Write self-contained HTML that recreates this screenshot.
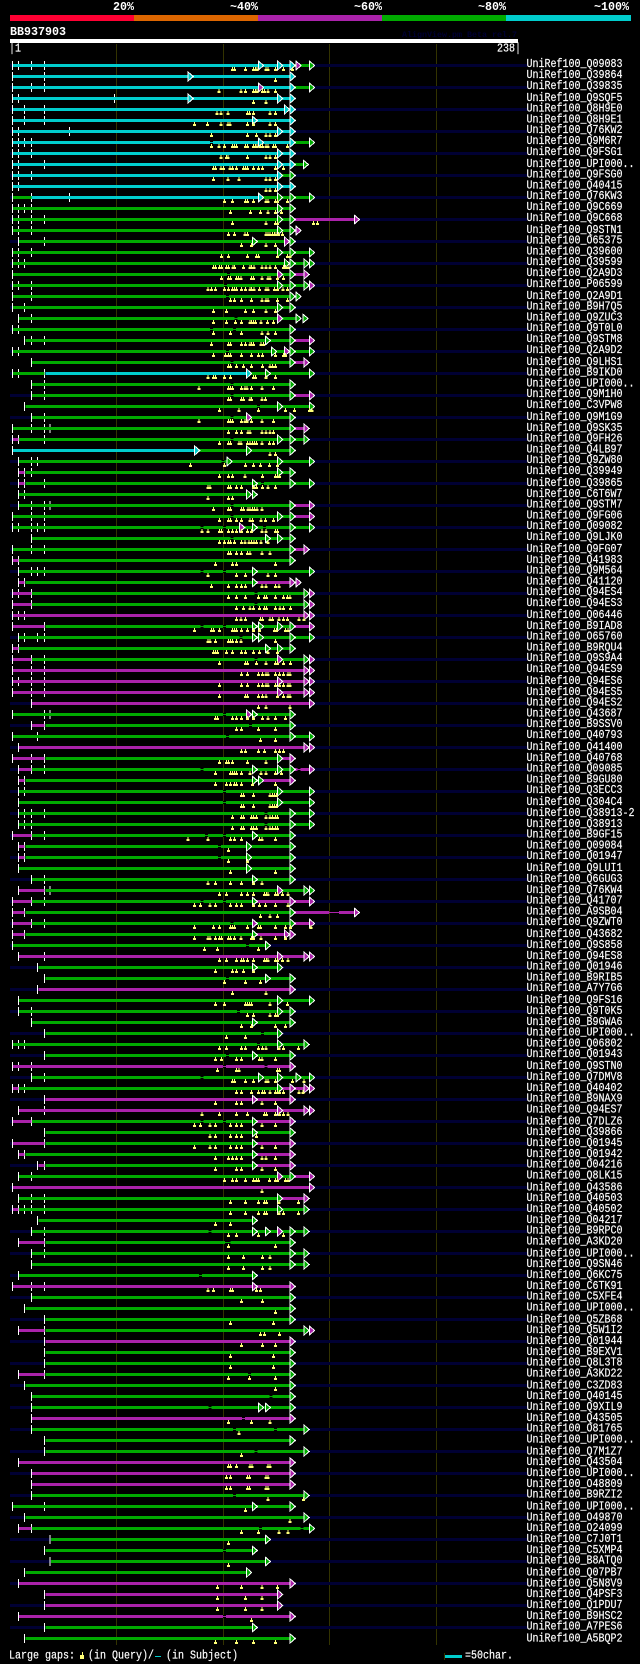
<!DOCTYPE html>
<html><head><meta charset="utf-8"><style>
html,body{margin:0;padding:0;background:#000}
body{width:640px;height:1664px;position:relative;overflow:hidden;font-family:"Liberation Mono",monospace;font-size:10px;color:#fff}
.a{position:absolute}
.h{position:absolute;font-weight:bold;font-size:11.67px;line-height:12px;white-space:pre}
.n{position:absolute;line-height:11px;white-space:pre;transform:scaleY(1.2);transform-origin:0 0;-webkit-text-stroke:.15px #fff}
#l{position:absolute;left:526.5px;top:60px;margin:0;font:10px/9.1667px "Liberation Mono",monospace;white-space:pre;transform:scaleY(1.2);transform-origin:0 0;-webkit-text-stroke:.15px #fff}
svg{position:absolute;left:0;top:0}
svg path{fill:none}
.c{fill:#0cc}.g{fill:#0a0}.m{fill:#a2a}
.t{marker:url(#T)}.k{marker:url(#K)}.y{marker:url(#Y)}
.e{marker:url(#A)}.b{marker:url(#B)}.d{marker:url(#D)}
</style></head><body>
<div class="a" style="left:116px;top:44px;width:1px;height:1601px;background:#330"></div>
<div class="a" style="left:223px;top:44px;width:1px;height:1601px;background:#330"></div>
<div class="a" style="left:329px;top:44px;width:1px;height:1601px;background:#330"></div>
<div class="a" style="left:436px;top:44px;width:1px;height:1601px;background:#330"></div>
<div class="a" style="left:10px;top:64px;width:517px;height:1565px;background:repeating-linear-gradient(#003 0 3px,transparent 3px 22px)"></div>
<div class="h" style="left:113px;top:1px">20%</div>
<div class="h" style="left:230px;top:1px">~40%</div>
<div class="h" style="left:354px;top:1px">~60%</div>
<div class="h" style="left:478px;top:1px">~80%</div>
<div class="h" style="left:594px;top:1px">~100%</div>
<div class="a" style="left:10px;top:15px;width:124px;height:6px;background:#f03"></div>
<div class="a" style="left:134px;top:15px;width:124px;height:6px;background:#d60"></div>
<div class="a" style="left:258px;top:15px;width:124px;height:6px;background:#a2a"></div>
<div class="a" style="left:382px;top:15px;width:124px;height:6px;background:#0a0"></div>
<div class="a" style="left:506px;top:15px;width:125px;height:6px;background:#0cc"></div>
<div class="h" style="left:10px;top:26px">BB937903</div>
<div class="a" style="left:402px;top:30px;font-size:8.33px;font-weight:bold;color:#003;line-height:10px;white-space:pre">AlignView.pm Beta rel.7</div>
<div class="a" style="left:10px;top:39px;width:508px;height:4px;background:#fff"></div>
<div class="n" style="left:9px;top:43px">|1</div>
<div class="n" style="left:497px;top:43px">238|</div>
<svg width="640" height="1664" shape-rendering="crispEdges">
<defs>
<marker id="T" markerUnits="userSpaceOnUse" markerWidth="1" markerHeight="1" overflow="visible"><rect x="-1.2" y="-4.5" width="2.45" height="9" fill="#fff"/></marker>
<marker id="K" markerUnits="userSpaceOnUse" markerWidth="1" markerHeight="1" overflow="visible"><rect x="-3.7" y="-1.5" width="7.35" height="1" fill="#000"/><rect x="-3.7" y=".5" width="7.35" height="1" fill="#000"/></marker>
<marker id="Y" markerUnits="userSpaceOnUse" markerWidth="1" markerHeight="1" overflow="visible"><path d="M-1.2 1.5h2.45v2h2.45v2h-7.35v-2h2.45z" style="fill:#ff7"/></marker>
<marker id="A" markerUnits="userSpaceOnUse" markerWidth="1" markerHeight="1" overflow="visible"><path d="M-1.2-5.5 14.7 0-1.2 5.5z" style="fill:#fff"/><path d="M1.25-3.5 10.5 0 1.25 3.5z" style="fill:#0cc"/></marker>
<marker id="B" markerUnits="userSpaceOnUse" markerWidth="1" markerHeight="1" overflow="visible"><path d="M-1.2-5.5 14.7 0-1.2 5.5z" style="fill:#fff"/><path d="M1.25-3.5 10.5 0 1.25 3.5z" style="fill:#0a0"/></marker>
<marker id="D" markerUnits="userSpaceOnUse" markerWidth="1" markerHeight="1" overflow="visible"><path d="M-1.2-5.5 14.7 0-1.2 5.5z" style="fill:#fff"/><path d="M1.25-3.5 10.5 0 1.25 3.5z" style="fill:#a2a"/></marker>
</defs>
<g transform="translate(0,.5) scale(.40816,1)">
<g transform=translate(0,65)><path class=t d="M30 0H45H77H109"/><path class=c d="M32-1.5H711v3H32z"/><path class=g d="M711-1.5H758v3H711z"/><path class=e d="M633 0H680H711"/><path class=d d="M725 0h0"/><path class=b d="M758 0h0"/><path class=y d="M569 0H574H601H621H626H630H652H657H675H694H716"/></g>
<g transform=translate(0,76)><path class=t d="M30 0H109"/><path class=c d="M32-1.5H711v3H32z"/><path class=e d="M461 0H711"/><path class=y d="M675 0h0"/></g>
<g transform=translate(0,87)><path class=t d="M30 0H77H109"/><path class=c d="M32-1.5H711v3H32z"/><path class=g d="M711-1.5H758v3H711z"/><path class=d d="M633 0h0"/><path class=e d="M711 0h0"/><path class=b d="M758 0h0"/><path class=y d="M537 0H591H601H621H626H630H643H648H657H675"/></g>
<g transform=translate(0,98)><path class=t d="M30 0H45H280"/><path class=c d="M32-1.5H711v3H32z"/><path class=e d="M461 0H680H711"/><path class=y d="M621 0H652"/></g>
<g transform=translate(0,109)><path class=t d="M30 0H60H109"/><path class=c d="M32-1.5H711v3H32z"/><path class=e d="M697 0H711"/><path class=y d="M532 0H542H559H606H611H621H662H675"/></g>
<g transform=translate(0,120)><path class=t d="M30 0H60H109"/><path class=c d="M32-1.5H711v3H32z"/><path class=e d="M618 0H711"/><path class=y d="M476 0H508H542H559H564H606H621H662H675"/></g>
<g transform=translate(0,131)><path class=t d="M30 0H45H170"/><path class=c d="M32-1.5H711v3H32z"/><path class=e d="M680 0H711"/><path class=y d="M518 0H606H628H652H662H675"/></g>
<g transform=translate(0,142)><path class=t d="M30 0H45H60H77"/><path class=c d="M32-1.5H711v3H32z"/><path class=g d="M711-1.5H758v3H711z"/><path class=k d="M518 0h0"/><path class=e d="M633 0H711"/><path class=b d="M758 0h0"/><path class=y d="M518 0H537H550H569H574H579H601H606H621H626H630H638H643H652H657H670H675H704"/></g>
<g transform=translate(0,153)><path class=t d="M30 0H45H77"/><path class=c d="M32-1.5H711v3H32z"/><path class=e d="M680 0H711"/><path class=y d="M542 0H555H559H606H652H662H675"/></g>
<g transform=translate(0,164)><path class=t d="M30 0H45H109"/><path class=c d="M32-1.5H711v3H32z"/><path class=g d="M711-1.5H743v3H711z"/><path class=e d="M680 0H711"/><path class=b d="M743 0h0"/><path class=y d="M523 0H528H542H547H564H569H579H596H601H606H621H633H643H675H694"/></g>
<g transform=translate(0,175)><path class=t d="M30 0H45H77"/><path class=c d="M32-1.5H680v3H32z"/><path class=g d="M680-1.5H711v3H680z"/><path class=e d="M680 0h0"/><path class=b d="M711 0h0"/><path class=y d="M523 0H559H586H652H662H675"/></g>
<g transform=translate(0,186)><path class=t d="M30 0H45"/><path class=c d="M32-1.5H711v3H32z"/><path class=e d="M680 0H711"/><path class=y d="M652 0H662H675"/></g>
<g transform=translate(0,197)><path class=t d="M30 0H77H170"/><path class=g d="M32-1.5H77v3H32zM633-1.5H758v3H633z"/><path class=c d="M77-1.5H633v3H77z"/><path class=e d="M633 0h0"/><path class=b d="M680 0H711H758"/><path class=y d="M550 0H569H601H606H621H652H657H675H680H704"/></g>
<g transform=translate(0,208)><path class=t d="M30 0H45H60H77"/><path class=g d="M32-1.5H711v3H32z"/><path class=b d="M680 0H711"/><path class=y d="M565 0H614H638H657H675H690"/></g>
<g transform=translate(0,219)><path class=t d="M30 0H45H77H109"/><path class=g d="M32-1.5H711v3H32z"/><path class=m d="M711-1.5H868v3H711z"/><path class=b d="M680 0H711"/><path class=d d="M868 0h0"/><path class=y d="M569 0H652H675H680H768H778"/></g>
<g transform=translate(0,230)><path class=t d="M30 0H45H77"/><path class=g d="M32-1.5H711v3H32z"/><path class=m d="M711-1.5H725v3H711z"/><path class=b d="M680 0H711"/><path class=d d="M725 0h0"/><path class=y d="M560 0H574H600H606H652H657H662H667H672H676H682H692"/></g>
<g transform=translate(0,241)><path class=t d="M45 0H109"/><path class=g d="M47-1.5H711v3H47z"/><path class=b d="M618 0H711"/><path class=d d="M697 0h0"/><path class=y d="M592 0H616H652H675"/></g>
<g transform=translate(0,252)><path class=t d="M30 0H45H77"/><path class=g d="M32-1.5H758v3H32z"/><path class=b d="M680 0H711H758"/><path class=y d="M543 0H560H606H628H633H680H704H710"/></g>
<g transform=translate(0,263)><path class=t d="M30 0H45H60"/><path class=g d="M32-1.5H758v3H32z"/><path class=b d="M697 0H711H745H758"/><path class=y d="M523 0H528H538H543H555H560H571H575H597H612H616H622H642H652H662H675H694H700H705"/></g>
<g transform=translate(0,274)><path class=t d="M30 0h0"/><path class=g d="M32-1.5H711v3H32z"/><path class=m d="M711-1.5H745v3H711z"/><path class=k d="M560 0h0"/><path class=d d="M680 0H745"/><path class=b d="M711 0h0"/><path class=y d="M543 0H560H565H579H584H590H616H621H642H657H662H680H694"/></g>
<g transform=translate(0,285)><path class=t d="M30 0H45H77"/><path class=g d="M32-1.5H745v3H32z"/><path class=m d="M745-1.5H758v3H745z"/><path class=k d="M553 0h0"/><path class=b d="M680 0H711H745"/><path class=d d="M758 0h0"/><path class=y d="M509 0H518H528H550H560H569H574H579H592H602H612H616H622H636H652H657H672H680H693H704"/></g>
<g transform=translate(0,296)><path class=t d="M30 0H77"/><path class=g d="M32-1.5H711v3H32z"/><path class=k d="M558 0h0"/><path class=b d="M711 0H725"/><path class=y d="M565 0H574H592H616H642H652H657H680H704"/></g>
<g transform=translate(0,307)><path class=t d="M30 0H60"/><path class=g d="M32-1.5H711v3H32z"/><path class=b d="M680 0H711"/><path class=y d="M523 0H555H602H621H652H675"/></g>
<g transform=translate(0,318)><path class=t d="M45 0H77"/><path class=g d="M47-1.5H725v3H47z"/><path class=k d="M578 0h0"/><path class=d d="M680 0h0"/><path class=b d="M725 0H742"/><path class=y d="M523 0H555H577H592H612H616H621H626H640H655H670"/></g>
<g transform=translate(0,329)><path class=t d="M30 0H45"/><path class=g d="M32-1.5H711v3H32z"/><path class=k d="M518 0H574"/><path class=b d="M711 0h0"/><path class=y d="M523 0H565H592H642H657H675"/></g>
<g transform=translate(0,340)><path class=t d="M60 0H77H109"/><path class=g d="M62-1.5H711v3H62z"/><path class=m d="M711-1.5H758v3H711z"/><path class=b d="M650 0H711"/><path class=d d="M758 0h0"/><path class=y d="M518 0H560H565H592H602H612H616H621H640H645"/></g>
<g transform=translate(0,351)><path class=t d="M30 0H45"/><path class=g d="M32-1.5H758v3H32z"/><path class=k d="M558 0h0"/><path class=b d="M665 0H711H758"/><path class=d d="M697 0h0"/><path class=y d="M523 0H553H560H565H592H616H633H643H675H695H700"/></g>
<g transform=translate(0,362)><path class=t d="M77 0h0"/><path class=g d="M79-1.5H711v3H79z"/><path class=m d="M711-1.5H745v3H711z"/><path class=k d="M569 0h0"/><path class=b d="M711 0h0"/><path class=d d="M745 0h0"/><path class=y d="M560 0H565H579H597H616H643H662H667H675"/></g>
<g transform=translate(0,373)><path class=t d="M30 0H45H109"/><path class=g d="M32-1.5H109v3H32zM604-1.5H758v3H604z"/><path class=c d="M111-1.5H604v3H111z"/><path class=e d="M604 0h0"/><path class=b d="M650 0H758"/><path class=y d="M509 0H523H528H550H565H621H626H652H675"/></g>
<g transform=translate(0,384)><path class=t d="M77 0H109"/><path class=g d="M79-1.5H711v3H79z"/><path class=k d="M569 0h0"/><path class=b d="M711 0h0"/><path class=y d="M487 0H560H565H570H592H600H605H616H642H670"/></g>
<g transform=translate(0,395)><path class=t d="M77 0H109"/><path class=g d="M79-1.5H711v3H79z"/><path class=m d="M711-1.5H758v3H711z"/><path class=k d="M569 0h0"/><path class=b d="M711 0h0"/><path class=d d="M758 0h0"/><path class=y d="M560 0H565H592H597H612H616H642H650"/></g>
<g transform=translate(0,406)><path class=t d="M60 0h0"/><path class=g d="M62-1.5H758v3H62z"/><path class=k d="M633 0h0"/><path class=b d="M680 0H758"/><path class=y d="M538 0H586H633H700H721H758H764"/></g>
<g transform=translate(0,417)><path class=t d="M77 0H109"/><path class=g d="M79-1.5H711v3H79z"/><path class=k d="M569 0h0"/><path class=d d="M604 0h0"/><path class=b d="M711 0h0"/><path class=y d="M487 0H560H565H570H592H600H605H616H642H670"/></g>
<g transform=translate(0,428)><path class=t d="M30 0H77H109H123"/><path class=g d="M32-1.5H711v3H32z"/><path class=m d="M711-1.5H745v3H711z"/><path class=b d="M711 0h0"/><path class=d d="M745 0h0"/><path class=y d="M560 0H579H592H607H612H642H652H662H670"/></g>
<g transform=translate(0,439)><path class=t d="M30 0H45H109"/><path class=m d="M32-1.5H45v3H32z"/><path class=g d="M47-1.5H745v3H47z"/><path class=k d="M569 0h0"/><path class=b d="M680 0H711H745"/><path class=y d="M538 0H560H565H585H590H606H612H618H624H628H642H660H670"/></g>
<g transform=translate(0,450)><path class=t d="M30 0h0"/><path class=c d="M32-1.5H477v3H32z"/><path class=g d="M477-1.5H711v3H477z"/><path class=e d="M477 0h0"/><path class=b d="M604 0H711"/><path class=y d="M662 0H675"/></g>
<g transform=translate(0,461)><path class=t d="M45 0H77H92"/><path class=g d="M47-1.5H758v3H47z"/><path class=k d="M546 0h0"/><path class=b d="M556 0H680H758"/><path class=y d="M467 0H550H602H621H638H660H680"/></g>
<g transform=translate(0,472)><path class=t d="M45 0H60H77"/><path class=m d="M47-1.5H60v3H47z"/><path class=g d="M62-1.5H711v3H62z"/><path class=b d="M680 0H711"/><path class=y d="M538 0H560H570H600H643H675H680H685"/></g>
<g transform=translate(0,483)><path class=t d="M45 0H60H109"/><path class=m d="M47-1.5H60v3H47z"/><path class=g d="M62-1.5H758v3H62z"/><path class=k d="M643 0h0"/><path class=b d="M618 0H711H758"/><path class=y d="M509 0H514H560H565H579H592H621H628H643H657H675"/></g>
<g transform=translate(0,494)><path class=t d="M45 0H60"/><path class=g d="M47-1.5H604v3H47z"/><path class=b d="M604 0H618"/><path class=y d="M509 0H560H570"/></g>
<g transform=translate(0,505)><path class=t d="M45 0H77H109H123"/><path class=g d="M47-1.5H711v3H47z"/><path class=m d="M711-1.5H758v3H711z"/><path class=k d="M569 0h0"/><path class=b d="M711 0h0"/><path class=d d="M758 0h0"/><path class=y d="M523 0H560H565H592H597H607H612H618H624H630H642"/></g>
<g transform=translate(0,516)><path class=t d="M30 0H77H109"/><path class=g d="M32-1.5H711v3H32z"/><path class=m d="M711-1.5H758v3H711z"/><path class=k d="M569 0h0"/><path class=b d="M680 0H711"/><path class=d d="M758 0h0"/><path class=y d="M538 0H560H565H579H592H612H618H640H650H670"/></g>
<g transform=translate(0,527)><path class=t d="M30 0H45H77H92H109"/><path class=g d="M32-1.5H758v3H32z"/><path class=k d="M495 0H550H648"/><path class=d d="M587 0h0"/><path class=b d="M618 0H711H758"/><path class=y d="M495 0H509H538H543H560H570H580H592H606H616H642H652H675H680"/></g>
<g transform=translate(0,538)><path class=t d="M77 0h0"/><path class=g d="M79-1.5H711v3H79z"/><path class=k d="M569 0h0"/><path class=b d="M650 0H680H711"/><path class=y d="M538 0H550H560H565H574H592H600H610H616H622H628H640H657"/></g>
<g transform=translate(0,549)><path class=t d="M30 0H77H109"/><path class=g d="M32-1.5H711v3H32z"/><path class=m d="M711-1.5H745v3H711z"/><path class=b d="M711 0h0"/><path class=d d="M745 0h0"/><path class=y d="M560 0H565H579H592H606H612H642H662"/></g>
<g transform=translate(0,560)><path class=t d="M30 0H45"/><path class=m d="M32-1.5H45v3H32z"/><path class=g d="M47-1.5H711v3H47z"/><path class=b d="M711 0h0"/><path class=y d="M528 0H570H579H675"/></g>
<g transform=translate(0,571)><path class=t d="M45 0H77H92H109"/><path class=g d="M47-1.5H758v3H47z"/><path class=k d="M495 0H550"/><path class=b d="M618 0H758"/><path class=y d="M509 0H579H602H657H675"/></g>
<g transform=translate(0,582)><path class=t d="M45 0H60"/><path class=m d="M47-1.5H60v3H47zM618-1.5H711v3H618z"/><path class=g d="M62-1.5H618v3H62z"/><path class=b d="M618 0h0"/><path class=d d="M711 0H725"/><path class=y d="M518 0H560H579H592H602H642H652H675H684"/></g>
<g transform=translate(0,593)><path class=t d="M30 0H45H77"/><path class=m d="M32-1.5H77v3H32z"/><path class=g d="M79-1.5H745v3H79z"/><path class=k d="M627 0h0"/><path class=b d="M745 0h0"/><path class=d d="M758 0h0"/><path class=y d="M560 0H579H602H633H648H653H675H694H704H710"/></g>
<g transform=translate(0,604)><path class=t d="M30 0H77"/><path class=m d="M32-1.5H77v3H32z"/><path class=g d="M79-1.5H745v3H79z"/><path class=k d="M627 0h0"/><path class=b d="M745 0h0"/><path class=d d="M758 0h0"/><path class=y d="M579 0H597H612H621H636H648H653H675H686H694H712"/></g>
<g transform=translate(0,615)><path class=t d="M30 0H45H60"/><path class=m d="M32-1.5H758v3H32z"/><path class=d d="M745 0H758"/><path class=y d="M579 0H590H602H638H643H662H668H684H694H704H733H745"/></g>
<g transform=translate(0,626)><path class=t d="M30 0H109"/><path class=m d="M32-1.5H109v3H32zM711-1.5H758v3H711z"/><path class=g d="M111-1.5H711v3H111z"/><path class=k d="M495 0H550"/><path class=b d="M618 0H633H680H711"/><path class=d d="M758 0h0"/><path class=y d="M476 0H518H523H538H570H575H579H592H606H621H636H672H678H700H706"/></g>
<g transform=translate(0,637)><path class=t d="M45 0H60H92H109"/><path class=g d="M47-1.5H758v3H47z"/><path class=k d="M590 0H640"/><path class=b d="M618 0H633H711H758"/><path class=y d="M509 0H514H528H560H565H570H579H590H675"/></g>
<g transform=translate(0,648)><path class=t d="M30 0H45"/><path class=m d="M32-1.5H45v3H32z"/><path class=g d="M47-1.5H711v3H47z"/><path class=b d="M650 0H680H711"/><path class=y d="M523 0H528H533H555H570H592H602H621H636H657H680"/></g>
<g transform=translate(0,659)><path class=t d="M30 0H77H109"/><path class=m d="M32-1.5H77v3H32z"/><path class=g d="M79-1.5H745v3H79z"/><path class=k d="M627 0h0"/><path class=d d="M680 0H758"/><path class=b d="M745 0h0"/><path class=y d="M538 0H602H606H628H652H675H680H694H712"/></g>
<g transform=translate(0,670)><path class=t d="M30 0H77H109"/><path class=m d="M32-1.5H758v3H32z"/><path class=d d="M745 0H758"/><path class=y d="M592 0H606H633H643H652H657H675H685H694H705H710"/></g>
<g transform=translate(0,681)><path class=t d="M30 0H45H77H109"/><path class=m d="M32-1.5H758v3H32z"/><path class=d d="M680 0H745H758"/><path class=y d="M538 0H592H606H633H643H652H657H675H685H694H705H710"/></g>
<g transform=translate(0,692)><path class=t d="M30 0H77H109"/><path class=m d="M32-1.5H758v3H32z"/><path class=d d="M680 0H745H758"/><path class=y d="M538 0H602H606H633H643H652H680H694H705H710"/></g>
<g transform=translate(0,703)><path class=t d="M77 0h0"/><path class=m d="M79-1.5H758v3H79z"/><path class=d d="M758 0h0"/><path class=y d="M633 0H652H711"/></g>
<g transform=translate(0,714)><path class=t d="M30 0H109H123"/><path class=g d="M32-1.5H711v3H32z"/><path class=k d="M550 0h0"/><path class=d d="M604 0h0"/><path class=b d="M618 0H711"/><path class=y d="M528 0H533H570H579H592H606H621H643H657H675H700"/></g>
<g transform=translate(0,725)><path class=t d="M77 0H109"/><path class=m d="M79-1.5H109v3H79z"/><path class=g d="M111-1.5H711v3H111z"/><path class=k d="M614 0h0"/><path class=b d="M711 0h0"/><path class=y d="M579 0H592H633H675"/></g>
<g transform=translate(0,736)><path class=t d="M30 0H92"/><path class=g d="M32-1.5H758v3H32z"/><path class=k d="M558 0h0"/><path class=b d="M711 0H758"/><path class=y d="M638 0H675"/></g>
<g transform=translate(0,747)><path class=t d="M45 0h0"/><path class=m d="M47-1.5H758v3H47z"/><path class=d d="M745 0H758"/><path class=y d="M592 0H602H633H648H675H685H694"/></g>
<g transform=translate(0,758)><path class=t d="M30 0H77H109"/><path class=m d="M32-1.5H109v3H32zM680-1.5H711v3H680z"/><path class=g d="M111-1.5H680v3H111z"/><path class=b d="M680 0h0"/><path class=d d="M711 0h0"/><path class=y d="M538 0H555H560H570H606H652"/></g>
<g transform=translate(0,769)><path class=t d="M45 0H77H109"/><path class=m d="M47-1.5H77v3H47zM711-1.5H758v3H711z"/><path class=g d="M79-1.5H711v3H79z"/><path class=k d="M495 0H733"/><path class=b d="M618 0H680H711"/><path class=d d="M758 0h0"/><path class=y d="M528 0H565H570H575H580H592H612H640H652H675H690"/></g>
<g transform=translate(0,780)><path class=t d="M45 0H60"/><path class=m d="M47-1.5H60v3H47zM633-1.5H711v3H633z"/><path class=g d="M62-1.5H633v3H62z"/><path class=b d="M618 0H633"/><path class=d d="M711 0h0"/><path class=y d="M528 0H555H565H575H580H592H618H675"/></g>
<g transform=translate(0,791)><path class=t d="M45 0H60"/><path class=g d="M47-1.5H758v3H47z"/><path class=k d="M550 0h0"/><path class=b d="M680 0H758"/><path class=y d="M592 0H597H621H662H668H672H678"/></g>
<g transform=translate(0,802)><path class=t d="M45 0h0"/><path class=g d="M47-1.5H758v3H47z"/><path class=k d="M550 0h0"/><path class=b d="M680 0H758"/><path class=y d="M592 0H597H621H662H668H672H678"/></g>
<g transform=translate(0,813)><path class=t d="M45 0H60H77H109"/><path class=g d="M47-1.5H758v3H47z"/><path class=k d="M652 0h0"/><path class=b d="M711 0H758"/><path class=y d="M570 0H592H597H616H621H628H652H662H668H675H680"/></g>
<g transform=translate(0,824)><path class=t d="M45 0H60H77"/><path class=g d="M47-1.5H758v3H47z"/><path class=k d="M652 0h0"/><path class=b d="M711 0H758"/><path class=y d="M570 0H592H597H616H621H628H652H662H668H675H680"/></g>
<g transform=translate(0,835)><path class=t d="M30 0H77H109"/><path class=m d="M32-1.5H77v3H32z"/><path class=g d="M79-1.5H711v3H79z"/><path class=k d="M506 0H550"/><path class=b d="M618 0H711"/><path class=y d="M460 0H509H565H574H592H636H642H675"/></g>
<g transform=translate(0,846)><path class=t d="M45 0H60"/><path class=m d="M47-1.5H60v3H47z"/><path class=g d="M62-1.5H711v3H62z"/><path class=k d="M538 0h0"/><path class=b d="M604 0H711"/><path class=y d="M560 0h0"/></g>
<g transform=translate(0,857)><path class=t d="M45 0H60"/><path class=m d="M47-1.5H60v3H47z"/><path class=g d="M62-1.5H711v3H62z"/><path class=k d="M538 0h0"/><path class=b d="M604 0H711"/><path class=y d="M560 0H606"/></g>
<g transform=translate(0,868)><path class=t d="M45 0h0"/><path class=g d="M47-1.5H711v3H47z"/><path class=b d="M604 0H711"/><path class=y d="M565 0H675"/></g>
<g transform=translate(0,879)><path class=t d="M77 0H109"/><path class=g d="M79-1.5H711v3H79z"/><path class=b d="M618 0H711"/><path class=y d="M509 0H528H565H592H621H642"/></g>
<g transform=translate(0,890)><path class=t d="M45 0H109H123"/><path class=m d="M47-1.5H109v3H47z"/><path class=g d="M111-1.5H745v3H111z"/><path class=d d="M680 0h0"/><path class=b d="M745 0H758"/><path class=y d="M538 0H555H592H606H621H648H653H657H675H680H692H705"/></g>
<g transform=translate(0,901)><path class=t d="M30 0H77H109"/><path class=m d="M32-1.5H77v3H32zM618-1.5H758v3H618z"/><path class=g d="M79-1.5H618v3H79z"/><path class=k d="M495 0H550"/><path class=b d="M618 0h0"/><path class=d d="M711 0H758"/><path class=y d="M477 0H491H514H528H565H579H592H621H636H650H675H705"/></g>
<g transform=translate(0,912)><path class=t d="M30 0H60"/><path class=m d="M32-1.5H60v3H32zM711-1.5H806v3H711zM806-.5H830v1H806zM830-1.5H868v3H830z"/><path class=g d="M62-1.5H711v3H62z"/><path class=b d="M711 0h0"/><path class=d d="M868 0h0"/><path class=y d="M638 0H662H680"/></g>
<g transform=translate(0,923)><path class=t d="M30 0H77H109"/><path class=m d="M32-1.5H77v3H32zM711-1.5H758v3H711z"/><path class=g d="M79-1.5H711v3H79z"/><path class=k d="M569 0h0"/><path class=d d="M618 0H758"/><path class=b d="M711 0h0"/><path class=y d="M477 0H523H538H565H570H575H606H633H638H675H700H712H762"/></g>
<g transform=translate(0,934)><path class=t d="M30 0H60"/><path class=m d="M32-1.5H60v3H32zM618-1.5H711v3H618z"/><path class=g d="M62-1.5H618v3H62z"/><path class=b d="M618 0h0"/><path class=d d="M697 0H711"/><path class=y d="M477 0H509H514H528H538H543H560H565H575H590H616H621H640H675H700"/></g>
<g transform=translate(0,945)><path class=t d="M30 0h0"/><path class=g d="M32-1.5H650v3H32z"/><path class=k d="M606 0h0"/><path class=b d="M650 0h0"/><path class=y d="M501 0H533H633"/></g>
<g transform=translate(0,956)><path class=t d="M45 0H109"/><path class=m d="M47-1.5H758v3H47z"/><path class=d d="M680 0H745H758"/><path class=y d="M538 0H555H579H592H597H606H621H648H653H657H675H680H692H705"/></g>
<g transform=translate(0,967)><path class=t d="M92 0h0"/><path class=g d="M94-1.5H680v3H94z"/><path class=b d="M618 0H680"/><path class=y d="M528 0H570H579H597H621"/></g>
<g transform=translate(0,978)><path class=t d="M109 0h0"/><path class=g d="M111-1.5H711v3H111z"/><path class=k d="M558 0h0"/><path class=b d="M650 0H711"/><path class=y d="M550 0H602H638"/></g>
<g transform=translate(0,989)><path class=t d="M92 0h0"/><path class=m d="M94-1.5H711v3H94z"/><path class=d d="M711 0h0"/><path class=y d="M570 0H652"/></g>
<g transform=translate(0,1000)><path class=t d="M45 0h0"/><path class=g d="M47-1.5H758v3H47z"/><path class=b d="M680 0H758"/><path class=y d="M528 0H550H602H606H611H616H662H704"/></g>
<g transform=translate(0,1011)><path class=t d="M45 0H77"/><path class=g d="M47-1.5H711v3H47z"/><path class=k d="M584 0h0"/><path class=b d="M680 0H711"/><path class=y d="M606 0H621H662H675H680"/></g>
<g transform=translate(0,1022)><path class=t d="M77 0h0"/><path class=g d="M79-1.5H711v3H79z"/><path class=b d="M618 0H711"/><path class=y d="M592 0H616H675H700"/></g>
<g transform=translate(0,1033)><path class=t d="M109 0h0"/><path class=g d="M111-1.5H680v3H111z"/><path class=k d="M643 0h0"/><path class=b d="M680 0h0"/><path class=y d="M555 0H602"/></g>
<g transform=translate(0,1044)><path class=t d="M30 0H45H60"/><path class=g d="M32-1.5H745v3H32z"/><path class=k d="M633 0h0"/><path class=b d="M680 0H745"/><path class=y d="M538 0H555H592H602H633H643H652H684H694H731"/></g>
<g transform=translate(0,1055)><path class=t d="M109 0h0"/><path class=g d="M111-1.5H711v3H111z"/><path class=k d="M558 0h0"/><path class=b d="M618 0H711"/><path class=y d="M528 0H543H579H592H636H642H675"/></g>
<g transform=translate(0,1066)><path class=t d="M30 0H45H77"/><path class=m d="M32-1.5H711v3H32z"/><path class=k d="M550 0H652"/><path class=d d="M711 0h0"/><path class=y d="M533 0H579H585H680H685"/></g>
<g transform=translate(0,1077)><path class=t d="M77 0H109"/><path class=g d="M79-1.5H758v3H79z"/><path class=k d="M495 0h0"/><path class=b d="M633 0H680H725H758"/><path class=y d="M570 0H575H602H621H652H657H675H716H745"/></g>
<g transform=translate(0,1088)><path class=t d="M30 0H45H60"/><path class=m d="M32-1.5H45v3H32zM680-1.5H758v3H680z"/><path class=g d="M47-1.5H680v3H47z"/><path class=b d="M680 0h0"/><path class=d d="M711 0H745H758"/><path class=y d="M579 0H592H616H633H643H648H662H675H680H685H694H733H742"/></g>
<g transform=translate(0,1099)><path class=t d="M109 0h0"/><path class=m d="M111-1.5H711v3H111z"/><path class=d d="M618 0H711"/><path class=y d="M528 0H579H592H642H675"/></g>
<g transform=translate(0,1110)><path class=t d="M45 0H109"/><path class=m d="M47-1.5H758v3H47z"/><path class=d d="M680 0H745H758"/><path class=y d="M495 0H538H579H606H648H653H675H685H694H705"/></g>
<g transform=translate(0,1121)><path class=t d="M30 0H77"/><path class=m d="M32-1.5H77v3H32zM618-1.5H711v3H618z"/><path class=g d="M79-1.5H618v3H79z"/><path class=k d="M495 0H550"/><path class=b d="M618 0h0"/><path class=d d="M711 0h0"/><path class=y d="M477 0H491H514H528H565H579H592H642H675"/></g>
<g transform=translate(0,1132)><path class=t d="M109 0h0"/><path class=g d="M111-1.5H711v3H111z"/><path class=b d="M618 0H711"/><path class=y d="M514 0H528H565H579H592H628"/></g>
<g transform=translate(0,1143)><path class=t d="M30 0H109"/><path class=m d="M32-1.5H109v3H32zM618-1.5H711v3H618z"/><path class=g d="M111-1.5H618v3H111z"/><path class=b d="M618 0h0"/><path class=d d="M711 0h0"/><path class=y d="M477 0H514H528H565H579H592H642H675"/></g>
<g transform=translate(0,1154)><path class=t d="M45 0H60"/><path class=m d="M47-1.5H60v3H47zM618-1.5H711v3H618z"/><path class=g d="M62-1.5H618v3H62z"/><path class=b d="M618 0h0"/><path class=d d="M711 0h0"/><path class=y d="M528 0H560H570H579H592H642H652H675"/></g>
<g transform=translate(0,1165)><path class=t d="M92 0H109"/><path class=m d="M94-1.5H109v3H94zM618-1.5H711v3H618z"/><path class=g d="M111-1.5H618v3H111z"/><path class=b d="M618 0h0"/><path class=d d="M711 0h0"/><path class=y d="M528 0H579H592H642H675"/></g>
<g transform=translate(0,1176)><path class=t d="M45 0H77"/><path class=g d="M47-1.5H711v3H47z"/><path class=m d="M711-1.5H758v3H711z"/><path class=d d="M680 0H758"/><path class=b d="M711 0h0"/><path class=y d="M550 0H570H579H602H621H628H633H660H675H680H700H705"/></g>
<g transform=translate(0,1187)><path class=t d="M30 0h0"/><path class=m d="M32-1.5H758v3H32z"/><path class=d d="M758 0h0"/><path class=y d="M642 0h0"/></g>
<g transform=translate(0,1198)><path class=t d="M45 0H77H109"/><path class=g d="M47-1.5H680v3H47z"/><path class=m d="M680-1.5H745v3H680z"/><path class=b d="M680 0h0"/><path class=d d="M745 0h0"/><path class=y d="M565 0H602H633H648H653H684H731"/></g>
<g transform=translate(0,1209)><path class=t d="M30 0H45H60H77H109"/><path class=m d="M32-1.5H45v3H32z"/><path class=g d="M47-1.5H745v3H47z"/><path class=b d="M680 0H745"/><path class=y d="M565 0H602H633H648H653H684H694H731"/></g>
<g transform=translate(0,1220)><path class=t d="M92 0h0"/><path class=g d="M94-1.5H618v3H94z"/><path class=b d="M618 0h0"/><path class=y d="M528 0H565"/></g>
<g transform=translate(0,1231)><path class=t d="M77 0H109"/><path class=g d="M79-1.5H745v3H79z"/><path class=k d="M514 0h0"/><path class=b d="M618 0H650H711H745"/><path class=d d="M680 0h0"/><path class=y d="M560 0H579H633H694"/></g>
<g transform=translate(0,1242)><path class=t d="M45 0H109"/><path class=m d="M47-1.5H109v3H47z"/><path class=g d="M111-1.5H711v3H111z"/><path class=k d="M555 0H561"/><path class=b d="M711 0h0"/><path class=y d="M560 0H675"/></g>
<g transform=translate(0,1253)><path class=t d="M77 0H109"/><path class=g d="M79-1.5H745v3H79z"/><path class=b d="M711 0H745"/><path class=y d="M560 0H597H643H662"/></g>
<g transform=translate(0,1264)><path class=t d="M77 0h0"/><path class=g d="M79-1.5H745v3H79z"/><path class=b d="M711 0H745"/><path class=y d="M560 0H597H643H662"/></g>
<g transform=translate(0,1275)><path class=t d="M45 0h0"/><path class=g d="M47-1.5H618v3H47z"/><path class=k d="M491 0h0"/><path class=b d="M618 0h0"/></g>
<g transform=translate(0,1286)><path class=t d="M30 0H77H109"/><path class=m d="M32-1.5H711v3H32z"/><path class=d d="M618 0H711"/><path class=y d="M509 0H523H565H570H628H638"/></g>
<g transform=translate(0,1297)><path class=t d="M77 0h0"/><path class=g d="M79-1.5H711v3H79z"/><path class=b d="M711 0h0"/><path class=y d="M592 0H643"/></g>
<g transform=translate(0,1308)><path class=t d="M60 0h0"/><path class=g d="M62-1.5H711v3H62z"/><path class=b d="M711 0h0"/><path class=y d="M675 0h0"/></g>
<g transform=translate(0,1319)><path class=t d="M109 0h0"/><path class=g d="M111-1.5H711v3H111z"/><path class=b d="M711 0h0"/><path class=y d="M565 0H670"/></g>
<g transform=translate(0,1330)><path class=t d="M45 0H109"/><path class=m d="M47-1.5H109v3H47z"/><path class=g d="M111-1.5H745v3H111z"/><path class=b d="M745 0h0"/><path class=d d="M758 0h0"/><path class=y d="M638 0H648H685"/></g>
<g transform=translate(0,1341)><path class=t d="M109 0h0"/><path class=m d="M111-1.5H711v3H111z"/><path class=d d="M711 0h0"/><path class=y d="M592 0H643H675"/></g>
<g transform=translate(0,1352)><path class=t d="M109 0h0"/><path class=g d="M111-1.5H711v3H111z"/><path class=b d="M711 0h0"/><path class=y d="M565 0H670"/></g>
<g transform=translate(0,1363)><path class=t d="M109 0h0"/><path class=g d="M111-1.5H711v3H111z"/><path class=b d="M711 0h0"/><path class=y d="M565 0H670"/></g>
<g transform=translate(0,1374)><path class=t d="M45 0H109"/><path class=m d="M47-1.5H109v3H47z"/><path class=g d="M111-1.5H711v3H111z"/><path class=k d="M611 0h0"/><path class=b d="M711 0h0"/><path class=y d="M560 0H611H675"/></g>
<g transform=translate(0,1385)><path class=t d="M60 0h0"/><path class=g d="M62-1.5H711v3H62z"/><path class=b d="M711 0h0"/><path class=y d="M675 0h0"/></g>
<g transform=translate(0,1396)><path class=t d="M77 0h0"/><path class=g d="M79-1.5H711v3H79z"/><path class=k d="M664 0h0"/><path class=b d="M711 0h0"/></g>
<g transform=translate(0,1407)><path class=t d="M77 0h0"/><path class=g d="M79-1.5H711v3H79z"/><path class=k d="M514 0h0"/><path class=b d="M633 0H650H711"/></g>
<g transform=translate(0,1418)><path class=t d="M77 0h0"/><path class=m d="M79-1.5H711v3H79z"/><path class=k d="M597 0h0"/><path class=d d="M711 0h0"/><path class=y d="M560 0H616H662"/></g>
<g transform=translate(0,1429)><path class=t d="M77 0h0"/><path class=g d="M79-1.5H745v3H79z"/><path class=k d="M574 0H675"/><path class=b d="M745 0h0"/><path class=y d="M586 0h0"/></g>
<g transform=translate(0,1440)><path class=t d="M109 0h0"/><path class=g d="M111-1.5H711v3H111z"/><path class=b d="M711 0h0"/></g>
<g transform=translate(0,1451)><path class=t d="M109 0h0"/><path class=g d="M111-1.5H745v3H111z"/><path class=k d="M627 0h0"/><path class=b d="M745 0h0"/><path class=y d="M592 0h0"/></g>
<g transform=translate(0,1462)><path class=t d="M45 0h0"/><path class=m d="M47-1.5H711v3H47z"/><path class=d d="M711 0h0"/><path class=y d="M560 0H565H579H612H617H657H662"/></g>
<g transform=translate(0,1473)><path class=t d="M77 0h0"/><path class=m d="M79-1.5H711v3H79z"/><path class=d d="M711 0h0"/><path class=y d="M555 0H565H606H611H652H657"/></g>
<g transform=translate(0,1484)><path class=t d="M77 0h0"/><path class=m d="M79-1.5H711v3H79z"/><path class=d d="M711 0h0"/><path class=y d="M555 0H565H606H611H652H657"/></g>
<g transform=translate(0,1495)><path class=t d="M77 0h0"/><path class=g d="M79-1.5H745v3H79z"/><path class=k d="M574 0h0"/><path class=b d="M745 0h0"/><path class=y d="M657 0H743"/></g>
<g transform=translate(0,1506)><path class=t d="M30 0H109"/><path class=g d="M32-1.5H711v3H32z"/><path class=b d="M618 0H711"/><path class=y d="M602 0h0"/></g>
<g transform=translate(0,1517)><path class=t d="M60 0h0"/><path class=g d="M62-1.5H745v3H62z"/><path class=b d="M745 0h0"/><path class=y d="M711 0h0"/></g>
<g transform=translate(0,1528)><path class=t d="M45 0H77"/><path class=m d="M47-1.5H77v3H47z"/><path class=g d="M79-1.5H758v3H79z"/><path class=k d="M638 0H740"/><path class=b d="M758 0h0"/><path class=y d="M592 0H633H684H705"/></g>
<g transform=translate(0,1539)><path class=t d="M123 0h0"/><path class=g d="M125-1.5H650v3H125z"/><path class=b d="M650 0h0"/><path class=y d="M560 0h0"/></g>
<g transform=translate(0,1550)><path class=t d="M109 0h0"/><path class=g d="M111-1.5H618v3H111z"/><path class=k d="M550 0h0"/><path class=b d="M618 0h0"/></g>
<g transform=translate(0,1561)><path class=t d="M123 0h0"/><path class=g d="M125-1.5H650v3H125z"/><path class=b d="M650 0h0"/><path class=y d="M560 0h0"/></g>
<g transform=translate(0,1572)><path class=t d="M60 0h0"/><path class=g d="M62-1.5H604v3H62z"/><path class=b d="M604 0h0"/></g>
<g transform=translate(0,1583)><path class=t d="M45 0h0"/><path class=m d="M47-1.5H711v3H47z"/><path class=d d="M711 0h0"/><path class=y d="M533 0H592H642H680"/></g>
<g transform=translate(0,1594)><path class=t d="M109 0h0"/><path class=m d="M111-1.5H680v3H111z"/><path class=d d="M680 0h0"/><path class=y d="M533 0H602H642"/></g>
<g transform=translate(0,1605)><path class=t d="M109 0h0"/><path class=m d="M111-1.5H680v3H111z"/><path class=d d="M680 0h0"/><path class=y d="M533 0H602H642"/></g>
<g transform=translate(0,1616)><path class=t d="M45 0h0"/><path class=m d="M47-1.5H711v3H47z"/><path class=k d="M550 0h0"/><path class=d d="M711 0h0"/><path class=y d="M616 0h0"/></g>
<g transform=translate(0,1627)><path class=t d="M109 0h0"/><path class=g d="M111-1.5H618v3H111z"/><path class=b d="M618 0h0"/></g>
<g transform=translate(0,1638)><path class=t d="M60 0h0"/><path class=g d="M62-1.5H711v3H62z"/><path class=b d="M711 0h0"/><path class=y d="M528 0H579H621H675"/></g>
</g>
<path d="M82 1652h1v3h1v4h-4v-4h2z" style="fill:#ff7"/>
<rect x="155" y="1656" width="6" height="1" fill="#0cc"/>
<rect x="444" y="1653" width="1" height="7" fill="#330"/>
<rect x="445" y="1655" width="17" height="3" fill="#0cc"/>
</svg>
<pre id="l">UniRef100_Q09083
UniRef100_Q39864
UniRef100_Q39835
UniRef100_Q9SQF5
UniRef100_Q8H9E0
UniRef100_Q8H9E1
UniRef100_Q76KW2
UniRef100_Q9M6R7
UniRef100_Q9FSG1
UniRef100_UPI000..
UniRef100_Q9FSG0
UniRef100_Q40415
UniRef100_Q76KW3
UniRef100_Q9C669
UniRef100_Q9C668
UniRef100_Q9STN1
UniRef100_O65375
UniRef100_Q39600
UniRef100_Q39599
UniRef100_Q2A9D3
UniRef100_P06599
UniRef100_Q2A9D1
UniRef100_B9H7Q5
UniRef100_Q9ZUC3
UniRef100_Q9T0L0
UniRef100_Q9STM8
UniRef100_Q2A9D2
UniRef100_Q9LHS1
UniRef100_B9IKD0
UniRef100_UPI000..
UniRef100_Q9M1H0
UniRef100_C3VPW8
UniRef100_Q9M1G9
UniRef100_Q9SK35
UniRef100_Q9FH26
UniRef100_Q4LB97
UniRef100_Q9ZW80
UniRef100_Q39949
UniRef100_Q39865
UniRef100_C6T6W7
UniRef100_Q9STM7
UniRef100_Q9FG06
UniRef100_Q09082
UniRef100_Q9LJK0
UniRef100_Q9FG07
UniRef100_Q41983
UniRef100_Q9M564
UniRef100_Q41120
UniRef100_Q94ES4
UniRef100_Q94ES3
UniRef100_Q06446
UniRef100_B9IAD8
UniRef100_O65760
UniRef100_B9RQU4
UniRef100_Q9S9A4
UniRef100_Q94ES9
UniRef100_Q94ES6
UniRef100_Q94ES5
UniRef100_Q94ES2
UniRef100_Q43687
UniRef100_B9SSV0
UniRef100_Q40793
UniRef100_Q41400
UniRef100_Q40768
UniRef100_Q09085
UniRef100_B9GU80
UniRef100_Q3ECC3
UniRef100_Q304C4
UniRef100_Q38913-2
UniRef100_Q38913
UniRef100_B9GF15
UniRef100_Q09084
UniRef100_Q01947
UniRef100_Q9LUI1
UniRef100_Q6GUG3
UniRef100_Q76KW4
UniRef100_Q41707
UniRef100_A9SB04
UniRef100_Q9ZWT0
UniRef100_Q43682
UniRef100_Q9S858
UniRef100_Q94ES8
UniRef100_Q01946
UniRef100_B9RIB5
UniRef100_A7Y7G6
UniRef100_Q9FS16
UniRef100_Q9T0K5
UniRef100_B9GWA6
UniRef100_UPI000..
UniRef100_Q06802
UniRef100_Q01943
UniRef100_Q9STN0
UniRef100_Q7DMV8
UniRef100_Q40402
UniRef100_B9NAX9
UniRef100_Q94ES7
UniRef100_Q7DLZ6
UniRef100_Q39866
UniRef100_Q01945
UniRef100_Q01942
UniRef100_O04216
UniRef100_Q8LK15
UniRef100_Q43586
UniRef100_Q40503
UniRef100_Q40502
UniRef100_O04217
UniRef100_B9RPC0
UniRef100_A3KD20
UniRef100_UPI000..
UniRef100_Q9SN46
UniRef100_Q6KC75
UniRef100_C6TK91
UniRef100_C5XFE4
UniRef100_UPI000..
UniRef100_Q5ZB68
UniRef100_Q5W1I2
UniRef100_Q01944
UniRef100_B9EXV1
UniRef100_Q8L3T8
UniRef100_A3KD22
UniRef100_C3ZD83
UniRef100_Q40145
UniRef100_Q9XIL9
UniRef100_Q43505
UniRef100_O81765
UniRef100_UPI000..
UniRef100_Q7M1Z7
UniRef100_Q43504
UniRef100_UPI000..
UniRef100_O48809
UniRef100_B9RZI2
UniRef100_UPI000..
UniRef100_O49870
UniRef100_O24099
UniRef100_C7J0T1
UniRef100_C5XMP4
UniRef100_B8ATQ0
UniRef100_Q07PB7
UniRef100_Q5N8V9
UniRef100_Q4PSF3
UniRef100_Q1PDU7
UniRef100_B9HSC2
UniRef100_A7PES6
UniRef100_A5BQP2</pre>
<div class="n" style="left:9px;top:1650px">Large gaps:</div>
<div class="n" style="left:88px;top:1650px">(in Query)/</div>
<div class="n" style="left:166px;top:1650px">(in Subject)</div>
<div class="n" style="left:465px;top:1650px">=50char.</div>
</body></html>
